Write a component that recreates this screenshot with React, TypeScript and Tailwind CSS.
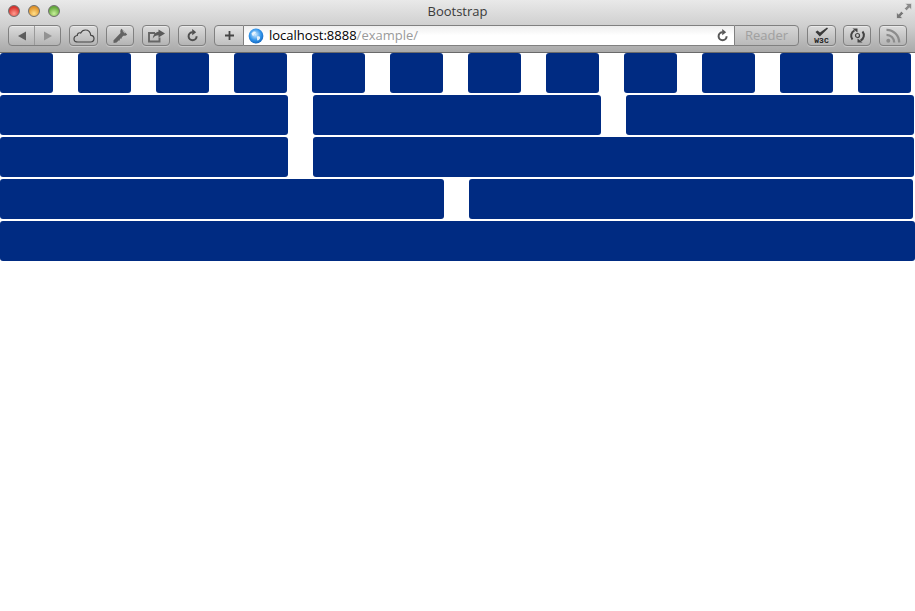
import React from "react";

const F = "font-['Open_Sans','Liberation_Sans',Arial,sans-serif]";

function Btn({ w, children }: { w: string; children: React.ReactNode }) {
  return (
    <div className={`${w} h-[21px] shrink-0 rounded-[4px] border border-[#808080] bg-gradient-to-b from-[#dcdcdc] to-[#b4b4b4] shadow-[inset_0_1px_0_rgba(255,255,255,0.4),0_1px_0_rgba(255,255,255,0.3)] flex items-center justify-center`}>
      {children}
    </div>
  );
}

function Light({ c }: { c: string }) {
  return <div className={`w-[12px] h-[12px] rounded-full border border-[#6f6f6f] ${c}`} />;
}

const Blue = ({ w }: { w: string }) => <div className={`${w} h-[40px] shrink-0 rounded-[3px] bg-[#002b82]`} />;

function Reload({ color = "#4f4f4f" }: { color?: string }) {
  return (
    <svg width="13" height="13" viewBox="0 0 13 13">
      <path d="M10.6 7.2A4 4 0 1 1 6.6 3.2" fill="none" stroke={color} strokeWidth="2" />
      <path d="M6.2 0L10.2 3.2L6.2 6.2Z" fill={color} />
    </svg>
  );
}

export default function App() {
  return (
    <div className={`w-[915px] h-[611px] bg-white overflow-hidden ${F}`}>
      <div className="relative h-[53px] bg-gradient-to-b from-[#e9e9e9] via-[#cfcfcf] to-[#a9a9a9] border-b border-[#6a6a6a] flex flex-col">
        <div className="h-[24px] pl-[8px] pt-[5px] relative shrink-0">
          <div className="flex gap-[8px]">
            <Light c="bg-[radial-gradient(circle_at_50%_75%,#ff9c90,#d8322c_70%)]" />
            <Light c="bg-[radial-gradient(circle_at_50%_75%,#ffdf8a,#e0932a_70%)]" />
            <Light c="bg-[radial-gradient(circle_at_50%_75%,#c8f09a,#63a83c_70%)]" />
          </div>
          <div className="absolute inset-x-0 top-[2px] text-center text-[13px] leading-[18px] text-[#3a3a3a]">Bootstrap</div>
          <svg className="absolute right-[3px] top-[3px]" width="16" height="16" viewBox="0 0 16 16">
            <path d="M15.5 0.5V6.8L13.4 4.8L10.6 7.8L8.4 5.6L11.3 2.7L9.2 0.5Z" fill="#8a8a8a" stroke="#e6e6e6" strokeWidth="0.6" />
            <path d="M0.5 15.5V9.2L2.6 11.2L5.4 8.2L7.6 10.4L4.7 13.3L6.8 15.5Z" fill="#777" stroke="#e6e6e6" strokeWidth="0.6" />
          </svg>
        </div>

        <div className="flex items-start pl-[8px] pr-[8px] gap-[8px] pt-[1px]">
          <div className="w-[53px] h-[21px] shrink-0 rounded-[4px] border border-[#808080] bg-gradient-to-b from-[#dcdcdc] to-[#b4b4b4] shadow-[inset_0_1px_0_rgba(255,255,255,0.4)] flex items-center">
            <div className="w-[26px] h-full flex items-center justify-center border-r border-[#9a9a9a]">
              <svg width="10" height="10" viewBox="0 0 10 10"><path d="M1 5L9 0.5V9.5Z" fill="#5c5c5c" /></svg>
            </div>
            <div className="flex-1 h-full flex items-center justify-center">
              <svg width="10" height="10" viewBox="0 0 10 10"><path d="M9 5L1 0.5V9.5Z" fill="#929292" /></svg>
            </div>
          </div>

          <Btn w="w-[29px]">
            <svg width="22" height="14" viewBox="0 0 22 14">
              <path d="M5 13H17.5C19.6 13 21 11.5 21 9.6C21 7.8 19.6 6.4 17.8 6.3C17.4 3.2 15.2 1 12.4 1C10.3 1 8.6 2.2 7.7 4.1C7 3.7 6 3.7 5.3 4.2C4.5 4.8 4.2 5.6 4.3 6.5C2.4 6.8 1 8.2 1 9.9C1 11.7 2.7 13 5 13Z" fill="none" stroke="#454545" strokeWidth="1.2" />
            </svg>
          </Btn>
          <Btn w="w-[28px]">
            <svg width="16" height="16" viewBox="0 0 16 16">
              <path d="M9.5 0.8L15.2 6.5C14.4 7.6 13 8 11.4 7.7L9.8 9.3V10.6H8.5L7.8 11.3V12.6H6.5L4.6 14.6L1.6 15L1.4 12.6L8.5 5C8 3.4 8.4 1.8 9.5 0.8Z" fill="#636363" />
              <path d="M10.6 2.8L13 5.2" stroke="#bdbdbd" strokeWidth="1" />
            </svg>
          </Btn>
          <Btn w="w-[28px]">
            <svg width="19" height="14" viewBox="0 0 19 14">
              <path d="M12.5 8.5V12.5H2V4H8" fill="none" stroke="#666" strokeWidth="1.9" />
              <path d="M11.5 0.5L18 4.5L11.5 8.5V6.3C9 6.3 7.3 7.3 5.8 9.5C6.2 5.8 8.3 3.1 11.5 2.8Z" fill="#5a5a5a" />
            </svg>
          </Btn>
          <Btn w="w-[28px]"><Reload /></Btn>

          <div className="w-[585px] h-[21px] shrink-0 flex">
            <div className="w-[30px] h-full shrink-0 rounded-l-[4px] border border-[#808080] bg-gradient-to-b from-[#e4e4e4] to-[#c0c0c0] flex items-center justify-center">
              <svg width="11" height="11" viewBox="0 0 11 11"><path d="M5.5 1V10M1 5.5H10" stroke="#454545" strokeWidth="1.8" /></svg>
            </div>
            <div className="flex-1 h-full bg-gradient-to-b from-[#efefef] via-white to-white border-y border-[#808080] flex items-center pl-[4px] pr-[5px]">
              <svg width="16" height="16" viewBox="0 0 16 16" className="shrink-0">
                <defs>
                  <radialGradient id="globe" cx="45%" cy="40%" r="65%">
                    <stop offset="0%" stopColor="#d3ecff" />
                    <stop offset="60%" stopColor="#2f93ea" />
                    <stop offset="100%" stopColor="#1260b8" />
                  </radialGradient>
                </defs>
                <circle cx="8" cy="8" r="7.4" fill="url(#globe)" />
                <path d="M3.5 5.5C5 3 7 3 8 4C7.6 6 5.5 6 5.5 8C4.5 8 4 7 3.5 5.5ZM9 8.5C11 8 12.5 8.5 12 10.5C11 12.5 9.5 13 9 12C9.5 11 8.5 10 9 8.5Z" fill="#f1f8fd" opacity="0.9" />
              </svg>
              <div className="ml-[5px] text-[13px] leading-[18px] -mt-[1px] whitespace-nowrap text-black">
                localhost:8888<span className="text-[#9a9a9a]">/example/</span>
              </div>
              <div className="ml-auto flex items-center"><Reload color="#585858" /></div>
            </div>
            <div className="w-[65px] h-full shrink-0 rounded-r-[4px] border border-[#808080] bg-gradient-to-b from-[#d6d6d6] to-[#bababa] flex items-center justify-center">
              <span className="text-[13px] leading-[18px] -mt-[1px] text-[#a0a0a0]">Reader</span>
            </div>
          </div>

          <Btn w="w-[29px]">
            <div className="flex flex-col items-center">
              <svg width="15" height="10" viewBox="0 0 15 10"><path d="M1.5 5L5.8 9.5L14 1.6L13 0.6L6 5.6L3.4 3.4Z" fill="#3a3a3a" /></svg>
              <span className="text-[8px] leading-[8px] font-bold text-[#222] font-['Liberation_Mono',monospace]">W3C</span>
            </div>
          </Btn>
          <div className="-ml-[1px]">
            <Btn w="w-[28px]">
              <svg width="17" height="17" viewBox="0 0 17 17">
                <path d="M3.5 12.5A6 6 0 0 1 5.5 3.3" fill="none" stroke="#444" strokeWidth="2" />
                <path d="M13.5 4.5A6 6 0 0 1 11.5 13.7" fill="none" stroke="#444" strokeWidth="2" />
                <path d="M3.5 1.5H8.5V5.5Z" fill="#444" />
                <path d="M13.5 15.5H8.5V11.5Z" fill="#444" />
                <circle cx="8.5" cy="8.5" r="2" fill="none" stroke="#444" strokeWidth="1.2" />
              </svg>
            </Btn>
          </div>
          <Btn w="w-[28px]">
            <svg width="16" height="16" viewBox="0 0 16 16">
              <circle cx="3.3" cy="12.7" r="2" fill="#8c8c8c" />
              <path d="M1.5 6.8A7.7 7.7 0 0 1 9.2 14.5" fill="none" stroke="#8c8c8c" strokeWidth="2.3" />
              <path d="M1.5 1.8A12.7 12.7 0 0 1 14.2 14.5" fill="none" stroke="#8c8c8c" strokeWidth="2.3" />
            </svg>
          </Btn>
        </div>
      </div>

      <div className="flex flex-col gap-[2px]">
        <div className="flex gap-[25px]">
          {Array.from({ length: 12 }, (_, i) => <Blue key={i} w="w-[53px]" />)}
        </div>
        <div className="flex gap-[25px]">
          <Blue w="w-[288px]" />
          <Blue w="w-[288px]" />
          <Blue w="w-[288px]" />
        </div>
        <div className="flex gap-[25px]">
          <Blue w="w-[288px]" />
          <Blue w="w-[601px]" />
        </div>
        <div className="flex gap-[25px]">
          <Blue w="w-[444px]" />
          <Blue w="w-[444px]" />
        </div>
        <Blue w="w-[915px]" />
      </div>
    </div>
  );
}
